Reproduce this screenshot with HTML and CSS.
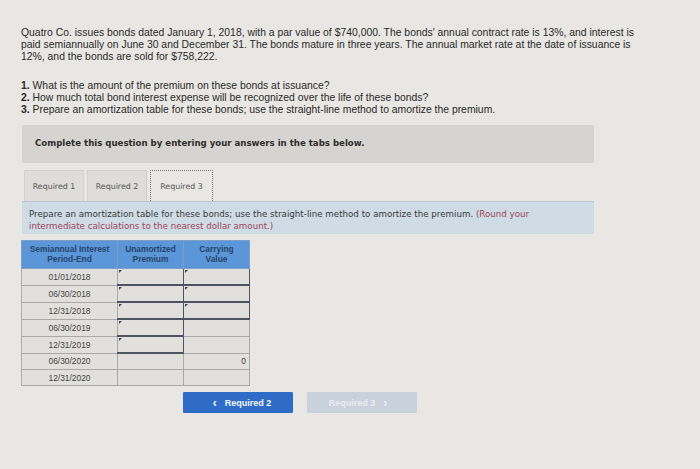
FILE: index.html
```html
<!DOCTYPE html>
<html>
<head>
<meta charset="utf-8">
<link rel="stylesheet" href="styles.css">
</head>
<body>
<div class="page">
  <p class="intro">Quatro Co. issues bonds dated January 1, 2018, with a par value of $740,000. The bonds' annual contract rate is 13%, and interest is<br>paid semiannually on June 30 and December 31. The bonds mature in three years. The annual market rate at the date of issuance is<br>12%, and the bonds are sold for $758,222.</p>
  <ol class="questions">
    <li><b>1.</b> What is the amount of the premium on these bonds at issuance?</li>
    <li><b>2.</b> How much total bond interest expense will be recognized over the life of these bonds?</li>
    <li><b>3.</b> Prepare an amortization table for these bonds; use the straight-line method to amortize the premium.</li>
  </ol>
  <div class="banner">Complete this question by entering your answers in the tabs below.</div>
  <div class="tabs">
    <div class="tab">Required 1</div>
    <div class="tab">Required 2</div>
    <div class="tab active">Required 3</div>
  </div>
  <div class="instr">Prepare an amortization table for these bonds; use the straight-line method to amortize the premium. <span class="red">(Round your<br>intermediate calculations to the nearest dollar amount.)</span></div>
  <table class="amort">
    <colgroup><col class="c1"><col class="c2"><col class="c3"></colgroup>
    <thead>
      <tr><th>Semiannual Interest<br>Period-End</th><th>Unamortized<br>Premium</th><th>Carrying<br>Value</th></tr>
    </thead>
    <tbody>
      <tr><td>01/01/2018</td><td class="inp"><span class="box"></span></td><td class="inp"><span class="box"></span></td></tr>
      <tr><td>06/30/2018</td><td class="inp"><span class="box"></span></td><td class="inp"><span class="box"></span></td></tr>
      <tr><td>12/31/2018</td><td class="inp"><span class="box"></span></td><td class="inp"><span class="box"></span></td></tr>
      <tr><td>06/30/2019</td><td class="inp"><span class="box"></span></td><td></td></tr>
      <tr><td>12/31/2019</td><td class="inp"><span class="box"></span></td><td></td></tr>
      <tr><td>06/30/2020</td><td></td><td class="num">0</td></tr>
      <tr><td>12/31/2020</td><td></td><td></td></tr>
    </tbody>
  </table>
  <div class="nav">
    <div class="btn prev"><span class="chev">&lsaquo;</span> Required 2</div>
    <div class="btn next">Required 3 <span class="chev">&rsaquo;</span></div>
  </div>
</div>
</body>
</html>
```
FILE: styles.css
```css
html, body {
  margin: 0;
  padding: 0;
  background: #e8e7e3;
}
.page {
  padding: 27px 0 0 21px;
  font-family: "Liberation Sans", Arial, sans-serif;
  color: #2a2a2a;
}
.intro {
  margin: 0;
  font-size: 10.4px;
  line-height: 12px;
  white-space: nowrap;
}
.questions {
  list-style: none;
  margin: 17px 0 0 0;
  padding: 0;
  font-size: 10.4px;
  line-height: 12px;
}
.banner {
  margin: 9px 0 0 1px;
  width: 572px;
  height: 38px;
  box-sizing: border-box;
  padding: 13px 0 0 13px;
  background: #d5d4d0;
  font-family: "DejaVu Sans", Verdana, sans-serif;
  font-weight: bold;
  font-size: 8.6px;
  color: #2e2e2e;
}
.tabs {
  display: flex;
  gap: 3px;
  margin: 7px 0 0 3px;
  height: 31px;
}
.tab {
  width: 60px;
  box-sizing: border-box;
  background: #dedddA;
  border: 1px solid #d2d1cd;
  border-bottom: none;
  font-family: "DejaVu Sans", Verdana, sans-serif;
  font-size: 7.9px;
  color: #555;
  display: flex;
  align-items: center;
  justify-content: center;
}
.tab.active {
  width: 63px;
  background: #e8e7e4;
  border: 1px dotted #7a7a7a;
  border-bottom: none;
}
.instr {
  margin-left: 1px;
  width: 572px;
  height: 33px;
  box-sizing: border-box;
  padding: 6px 0 0 7px;
  background: #cfdbe5;
  border-top: 1px solid #b8c6d2;
  font-family: "DejaVu Sans", Verdana, sans-serif;
  font-size: 8.7px;
  line-height: 12px;
  color: #3a3a3a;
  white-space: nowrap;
}
.red {
  color: #a0455a;
}
.amort {
  margin-top: 6px;
  border-collapse: collapse;
  table-layout: fixed;
  width: 228px;
  font-family: "Liberation Sans", Arial, sans-serif;
  font-size: 8.4px;
}
.amort .c1 { width: 96px; }
.amort .c2 { width: 66px; }
.amort .c3 { width: 66px; }
.amort th {
  background: #5b96d8;
  color: #26456c;
  font-weight: bold;
  height: 27px;
  padding: 0;
  line-height: 9.5px;
  font-size: 8.4px;
  border: 1px solid #7e9ec4;
  vertical-align: middle;
  white-space: nowrap;
}
.amort td {
  height: 15px;
  padding: 0;
  text-align: center;
  color: #444;
  background: #e1e0dc;
  border: 1px solid #a9a9a6;
  position: relative;
}
.amort td.num {
  text-align: right;
  padding-right: 3px;
}
.amort td.inp {
  border: 1px solid #4d5360;
  border-bottom: 2px solid #4d5360;
}
.box {
  position: absolute;
  left: 1px;
  top: 1px;
  width: 0;
  height: 0;
  border-top: 3px solid #3a4660;
  border-right: 3px solid transparent;
}
.nav {
  display: flex;
  gap: 14px;
  margin: 6px 0 0 162px;
}
.btn {
  width: 110px;
  height: 21px;
  display: flex;
  align-items: center;
  justify-content: center;
  font-family: "Liberation Sans", Arial, sans-serif;
  font-weight: bold;
  font-size: 9px;
  border-radius: 1px;
}
.btn.prev {
  background: #2f6cc8;
  color: #f4f7fc;
}
.btn.next {
  background: #c8d1dc;
  color: #e9edf2;
}
.chev {
  font-size: 12px;
  font-weight: bold;
  margin: 0 8px;
  line-height: 1;
}
```
